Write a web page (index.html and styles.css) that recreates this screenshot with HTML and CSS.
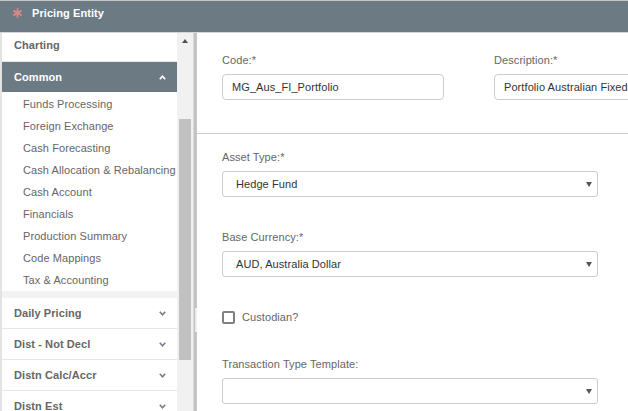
FILE: index.html
```html
<!DOCTYPE html>
<html>
<head>
<meta charset="utf-8">
<title>Pricing Entity</title>
<link rel="stylesheet" href="styles.css">
</head>
<body>
<div class="app">
  <header class="topbar">
    <svg class="star" width="9" height="10" viewBox="0 0 9 10"><g stroke="#d98a8a" stroke-width="1.8"><line x1="4.5" y1="0.3" x2="4.5" y2="9.7"/><line x1="0.4" y1="2.6" x2="8.6" y2="7.4"/><line x1="0.4" y1="7.4" x2="8.6" y2="2.6"/></g></svg>
    <span class="title">Pricing Entity</span>
  </header>
  <div class="main">
    <nav class="sidebar">
      <div class="sec sec-first">Charting</div>
      <div class="sec sec-active">Common
        <svg class="chev" width="7" height="5" viewBox="0 0 7 5"><polyline points="0.8,4.2 3.5,1.2 6.2,4.2" fill="none" stroke="#ffffff" stroke-width="1.7"/></svg>
      </div>
      <ul class="sub">
        <li>Funds Processing</li>
        <li>Foreign Exchange</li>
        <li>Cash Forecasting</li>
        <li>Cash Allocation &amp; Rebalancing</li>
        <li>Cash Account</li>
        <li>Financials</li>
        <li>Production Summary</li>
        <li>Code Mappings</li>
        <li>Tax &amp; Accounting</li>
      </ul>
      <div class="sec">Daily Pricing
        <svg class="chev" width="7" height="5" viewBox="0 0 7 5"><polyline points="0.8,0.8 3.5,3.8 6.2,0.8" fill="none" stroke="#7a7c8c" stroke-width="1.6"/></svg>
      </div>
      <div class="sec">Dist - Not Decl
        <svg class="chev" width="7" height="5" viewBox="0 0 7 5"><polyline points="0.8,0.8 3.5,3.8 6.2,0.8" fill="none" stroke="#7a7c8c" stroke-width="1.6"/></svg>
      </div>
      <div class="sec">Distn Calc/Accr
        <svg class="chev" width="7" height="5" viewBox="0 0 7 5"><polyline points="0.8,0.8 3.5,3.8 6.2,0.8" fill="none" stroke="#7a7c8c" stroke-width="1.6"/></svg>
      </div>
      <div class="sec">Distn Est
        <svg class="chev" width="7" height="5" viewBox="0 0 7 5"><polyline points="0.8,0.8 3.5,3.8 6.2,0.8" fill="none" stroke="#7a7c8c" stroke-width="1.6"/></svg>
      </div>
    </nav>
    <div class="scrollbar">
      <div class="sb-btn"><span class="sb-arrow"></span></div>
      <div class="sb-thumb"></div>
    </div>
    <div class="splitter"><div class="grip"></div></div>
    <main class="content">
      <div class="top-fields">
        <div class="field">
          <label class="lbl">Code:*</label>
          <div class="input">MG_Aus_FI_Portfolio</div>
        </div>
        <div class="field">
          <label class="lbl">Description:*</label>
          <div class="input input-wide">Portfolio Australian Fixed</div>
        </div>
      </div>
      <div class="form">
        <div class="group">
          <label class="lbl">Asset Type:*</label>
          <div class="select"><span>Hedge Fund</span><span class="caret"></span></div>
        </div>
        <div class="group">
          <label class="lbl">Base Currency:*</label>
          <div class="select"><span>AUD, Australia Dollar</span><span class="caret"></span></div>
        </div>
        <div class="group check-row">
          <span class="checkbox"></span>
          <span class="check-label">Custodian?</span>
        </div>
        <div class="group">
          <label class="lbl">Transaction Type Template:</label>
          <div class="select"><span></span><span class="caret"></span></div>
        </div>
      </div>
    </main>
  </div>
</div>
</body>
</html>
```

FILE: styles.css
```css
html, body {
  margin: 0;
  padding: 0;
}
body {
  width: 628px;
  height: 411px;
  overflow: hidden;
  font-family: "Liberation Sans", Arial, sans-serif;
  font-size: 11px;
  letter-spacing: 0.08px;
  background: #ffffff;
}
.app {
  display: flex;
  flex-direction: column;
  height: 411px;
}
.topbar {
  flex: none;
  height: 23px;
  padding: 0 0 8px 13px;
  border-top: 1px solid #c3c7ca;
  border-bottom: 1px solid #d3d5d7;
  background: #6b7a83;
  display: flex;
  align-items: center;
  gap: 10px;
}
.star {
  display: block;
}
.title {
  color: #ffffff;
  font-weight: bold;
  font-size: 11px;
  line-height: 14px;
}
.main {
  flex: 1;
  display: flex;
  min-height: 0;
}
.sidebar {
  flex: none;
  width: 175px;
  border-left: 2px solid #e3e3e3;
  background: #ffffff;
  overflow: hidden;
}
.sec {
  height: 30px;
  border-bottom: 1px solid #e6e6e6;
  display: flex;
  align-items: center;
  justify-content: space-between;
  padding: 0 11px 0 12px;
  font-weight: bold;
  color: #666666;
}
.sec-first {
  height: 28px;
  align-items: flex-start;
  line-height: 24px;
}
.sec-active {
  background: #6b7a83;
  color: #ffffff;
  border-bottom: none;
}
.chev {
  display: block;
}
.sub {
  list-style: none;
  margin: 0;
  padding: 1px 0 0 0;
  border-bottom: 7px solid #f2f2f2;
}
.sub li {
  height: 22px;
  line-height: 22px;
  padding-left: 21px;
  color: #666666;
  white-space: nowrap;
}
.scrollbar {
  flex: none;
  width: 16px;
  background: #f1f1f1;
  display: flex;
  flex-direction: column;
}
.sb-btn {
  height: 16px;
  display: flex;
  align-items: center;
  justify-content: center;
}
.sb-arrow {
  width: 0;
  height: 0;
  border-left: 3.5px solid transparent;
  border-right: 3.5px solid transparent;
  border-bottom: 4px solid #505050;
}
.sb-thumb {
  margin: 70px 2px 0 2px;
  height: 241px;
  background: #c1c1c1;
}
.splitter {
  flex: none;
  width: 3px;
  border-left: 1px solid #d8d8d8;
  background: #c4c4c4;
}
.grip {
  margin-top: 275px;
  margin-left: 1px;
  width: 2px;
  height: 24px;
  background: #ececec;
}
.content {
  flex: 1;
  background: #ffffff;
  overflow: hidden;
  min-width: 0;
}
.top-fields {
  height: 80px;
  padding: 20px 0 0 25px;
  border-bottom: 1px solid #cfcfcf;
  display: flex;
  gap: 50px;
}
.field {
  flex: none;
}
.lbl {
  display: block;
  line-height: 14px;
  color: #666666;
  margin-bottom: 7px;
  white-space: nowrap;
}
.input {
  box-sizing: border-box;
  width: 222px;
  height: 26px;
  border: 1px solid #cccccc;
  border-radius: 4px;
  padding-left: 9px;
  line-height: 24px;
  color: #333333;
  white-space: nowrap;
  overflow: hidden;
}
.input-wide {
  width: 240px;
}
.form {
  padding: 16px 0 0 25px;
}
.group {
  margin-bottom: 33px;
}
.select {
  box-sizing: border-box;
  width: 376px;
  height: 26px;
  border: 1px solid #cccccc;
  border-radius: 3px;
  padding: 0 5px 0 13px;
  display: flex;
  align-items: center;
  justify-content: space-between;
  color: #333333;
}
.caret {
  width: 0;
  height: 0;
  border-left: 3px solid transparent;
  border-right: 3px solid transparent;
  border-top: 5px solid #555555;
}
.check-row {
  display: flex;
  align-items: center;
  height: 14px;
  gap: 7px;
}
.checkbox {
  box-sizing: border-box;
  width: 13px;
  height: 13px;
  border: 2px solid #808080;
  border-radius: 2px;
  background: #ffffff;
}
.check-label {
  color: #666666;
  line-height: 14px;
}
```
